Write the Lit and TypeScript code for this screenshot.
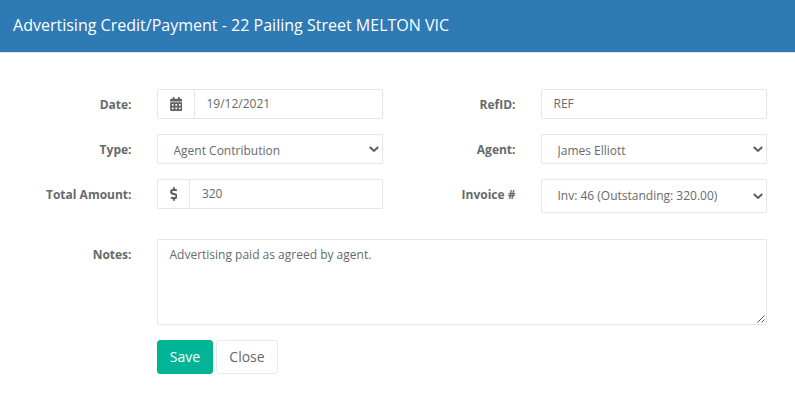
import { LitElement, html, css } from "lit";
import { customElement, property } from "lit/decorators.js";

const cell = (x: number, y: number) =>
  `M${x + 12} ${y}h40c6.6 0 12 5.4 12 12v40c0 6.6-5.4 12-12 12h-40c-6.6 0-12-5.4-12-12v-40c0-6.6 5.4-12 12-12z`;

const calendarPath =
  "M0 464c0 26.5 21.5 48 48 48h352c26.5 0 48-21.5 48-48V192H0z" +
  [64, 192, 320].map((x) => cell(x, 256) + cell(x, 384)).join("") +
  "M400 64h-48V16c0-8.800-7.200-16-16-16h-32c-8.800 0-16 7.200-16 16v48H160V16c0-8.800-7.200-16-16-16h-32c-8.800 0-16 7.200-16 16v48H48C21.500 64 0 85.500 0 112v48h448v-48c0-26.500-21.500-48-48-48z";

const dollarPath =
  "M209.200 233.400l-108-31.600C88.700 198.200 80 186.500 80 173.500c0-16.300 13.200-29.500 29.500-29.500h66.300c12.200 0 24.200 3.700 34.200 10.500 6.100 4.100 14.300 3.100 19.500-2l34.800-34c7.100-6.900 6.100-18.400-1.800-24.500C238 74.800 207.400 64.100 176 64V16c0-8.800-7.200-16-16-16h-32c-8.800 0-16 7.200-16 16v48h-2.500C45.800 64-5.400 118.700.5 183.600c4.200 46.100 39.400 83.600 83.800 96.600l102.500 30c12.500 3.700 21.200 15.300 21.200 28.300 0 16.300-13.200 29.500-29.500 29.500h-66.300C100 368 88 364.300 78 357.500c-6.100-4.100-14.300-3.100-19.500 2l-34.800 34c-7.100 6.900-6.100 18.400 1.800 24.500 24.500 19.200 55.100 29.900 86.500 30v48c0 8.800 7.200 16 16 16h32c8.800 0 16-7.200 16-16v-48.200c46.600-.9 90.300-28.600 105.700-72.700 21.500-61.600-14.600-124.800-72.500-141.700z";

@customElement("select-box")
class SelectBox extends LitElement {
  @property() value = "";

  static styles = css`
    :host {
      display: flex;
      box-sizing: border-box;
      height: 30px;
      border: 1px solid #e5e6e7;
      border-radius: 1px;
      padding: 7px 3px 5px 15.5px;
      justify-content: space-between;
      align-items: flex-start;
    }
    :host([tall]) {
      height: 34px;
      padding-top: 6px;
    }
    .value {
      height: 16px;
      line-height: 17px;
      overflow: hidden;
      white-space: nowrap;
    }
    :host([tall]) .value {
      height: 20px;
      line-height: 19px;
    }
    .chevron {
      width: 10px;
      height: 6px;
      margin-top: 4px;
      overflow: visible;
    }
    :host([tall]) .chevron {
      margin-top: 7px;
    }
  `;

  render() {
    return html`<span class="value">${this.value}</span>
      <svg class="chevron" viewBox="0 0 10 6">
        <path d="M0.800 1L5 4.900L9.200 1" fill="none" stroke="#5c5f61" stroke-width="2.100" />
      </svg>`;
  }
}

@customElement("app-root")
class AppRoot extends LitElement {
  static styles = css`
    :host {
      display: block;
      box-sizing: border-box;
      height: 417px;
      background: #fff;
      color: #676a6c;
      font: 12px/18px "Open Sans", sans-serif;
      overflow: hidden;
    }
    .header {
      box-sizing: border-box;
      height: 53px;
      padding: 13px;
      background: #2d7ab5;
      border-bottom: 1px solid #e5e6e7;
      color: #fff;
      font-size: 16px;
      line-height: 24px;
      font-weight: 500;
      letter-spacing: 0.01px;
      white-space: nowrap;
    }
    .form {
      display: grid;
      grid-template-columns: 131px 226px 106px 226px;
      grid-template-rows: 30px 30px 45px 86px 34px;
      gap: 15px 26px;
      align-items: start;
      padding-top: 36px;
    }
    .form > * {
      min-width: 0;
    }
    .label {
      font-weight: 700;
      text-align: right;
      padding-top: 7px;
      margin-right: -0.5px;
      white-space: nowrap;
    }
    .field {
      display: flex;
      box-sizing: border-box;
      height: 30px;
      border: 1px solid #e5e6e7;
      border-radius: 1px;
    }
    .addon {
      display: flex;
      align-items: center;
      padding: 0 12px 0 11.5px;
      border-right: 1px solid #e5e6e7;
    }
    .icon {
      display: block;
      height: 14px;
      fill: #5f6264;
    }
    .calendar {
      width: 12.5px;
    }
    .dollar {
      width: 7.880px;
    }
    .text {
      padding: 5px 11.5px;
    }
    .notes {
      position: relative;
      grid-column: 2 / 5;
      box-sizing: border-box;
      height: 86px;
      border: 1px solid #e5e6e7;
      border-radius: 1px;
      padding: 6px 11.5px;
    }
    .grip {
      position: absolute;
      right: 1px;
      bottom: 1px;
      width: 8px;
      height: 8px;
    }
    .actions {
      grid-column: 2 / 5;
      display: flex;
      gap: 3px;
    }
    .button {
      box-sizing: border-box;
      height: 34px;
      padding: 6px 0;
      border: 1px solid #e7eaec;
      border-radius: 3px;
      background: #fff;
      color: inherit;
      font: 14px/20px "Open Sans", sans-serif;
    }
    .save {
      width: 56px;
      background: #00b495;
      border-color: #00b495;
      color: #fff;
      font-weight: 500;
    }
    .close {
      width: 62px;
    }
  `;

  render() {
    return html`
      <div class="header">Advertising Credit/Payment - 22 Pailing Street MELTON VIC</div>
      <div class="form">
        <div class="label">Date:</div>
        <div class="field">
          <span class="addon"
            ><svg class="icon calendar" viewBox="0 0 448 512">
              <path fill-rule="evenodd" d=${calendarPath} /></svg
          ></span>
          <span class="text">19/12/2021</span>
        </div>
        <div class="label">RefID:</div>
        <div class="field"><span class="text">REF</span></div>

        <div class="label">Type:</div>
        <select-box value="Agent Contribution"></select-box>
        <div class="label">Agent:</div>
        <select-box value="James Elliott"></select-box>

        <div class="label">Total Amount:</div>
        <div class="field">
          <span class="addon"
            ><svg class="icon dollar" viewBox="0 0 288 512"><path d=${dollarPath} /></svg
          ></span>
          <span class="text">320</span>
        </div>
        <div class="label">Invoice #</div>
        <select-box tall value="Inv: 46 (Outstanding: 320.00)"></select-box>

        <div class="label">Notes:</div>
        <div class="notes">
          Advertising paid as agreed by agent.
          <svg class="grip" viewBox="0 0 8 8">
            <path d="M0.500 7.500L7.500 0.500M4.500 7.500L7.500 4.500" stroke="#555" stroke-width="1" />
          </svg>
        </div>

        <div class="actions">
          <button class="button save">Save</button>
          <button class="button close">Close</button>
        </div>
      </div>
    `;
  }
}
